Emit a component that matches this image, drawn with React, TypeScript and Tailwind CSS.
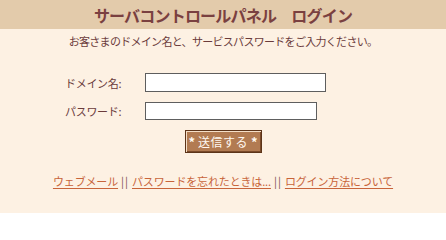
import React from "react";

export default function App() {
  const font = { fontFamily: '"Noto Sans CJK JP", "Noto Sans", sans-serif' };
  return (
    <div
      className="w-[446px] h-[213px] bg-[#fdf1e3] flex flex-col items-center overflow-hidden"
      style={font}
    >
      <div className="w-full h-[29px] shrink-0 bg-[#e3cbab] flex items-center justify-center">
        <h1 className="text-[16px] leading-[16px] font-bold tracking-[-0.8px] text-[#7a4040]">
          サーバコントロールパネル　ログイン
        </h1>
      </div>
      <p className="mt-[6px] text-[11px] leading-[12px] tracking-[-0.7px] text-[#6b3b3b]">
        お客さまのドメイン名と、サービスパスワードをご入力ください。
      </p>
      <form className="w-full flex flex-col mt-[26px]" onSubmit={(e) => e.preventDefault()}>
        <div className="flex items-center h-[19px] pl-[65px]">
          <label className="w-[80px] text-[11px] leading-[12px] tracking-[-0.3px] text-[#6b3b3b]">
            ドメイン名:
          </label>
          <input
            type="text"
            className="w-[181px] h-[19px] bg-white border border-[#5e5e5e] outline-none"
          />
        </div>
        <div className="flex items-center h-[18px] mt-[10px] pl-[65px]">
          <label className="w-[80px] text-[11px] leading-[12px] tracking-[-0.3px] text-[#6b3b3b]">
            パスワード:
          </label>
          <input
            type="password"
            className="w-[172px] h-[18px] bg-white border border-[#5e5e5e] outline-none"
          />
        </div>
        <div className="flex justify-center mt-[10px]">
          <button
            type="submit"
            className="w-[77px] h-[23px] bg-[#b27b52] border border-[#5c3419] shadow-[inset_1px_1px_0_#f5dfc8,inset_-1px_-1px_0_#7a4a2a] text-[12px] leading-[12px] text-[#fff8f0] flex items-center justify-center gap-[3px]"
          >
            <span className="font-bold text-[13px]">*</span>
            <span className="tracking-[0.5px]">送信する</span>
            <span className="font-bold text-[13px]">*</span>
          </button>
        </div>
      </form>
      <div className="mt-[22px] flex items-center text-[11px] leading-[12px] tracking-[-0.15px] text-[#7a4a4a] whitespace-nowrap">
        <a href="#" className="text-[#c8643a] underline underline-offset-[2px]">
          ウェブメール
        </a>
        <span className="mx-[3px] tracking-[1px]">||</span>
        <a href="#" className="text-[#c8643a] underline underline-offset-[2px]">
          パスワードを忘れたときは...
        </a>
        <span className="mx-[3px] tracking-[1px]">||</span>
        <a href="#" className="text-[#c8643a] underline underline-offset-[2px]">
          ログイン方法について
        </a>
      </div>
    </div>
  );
}
